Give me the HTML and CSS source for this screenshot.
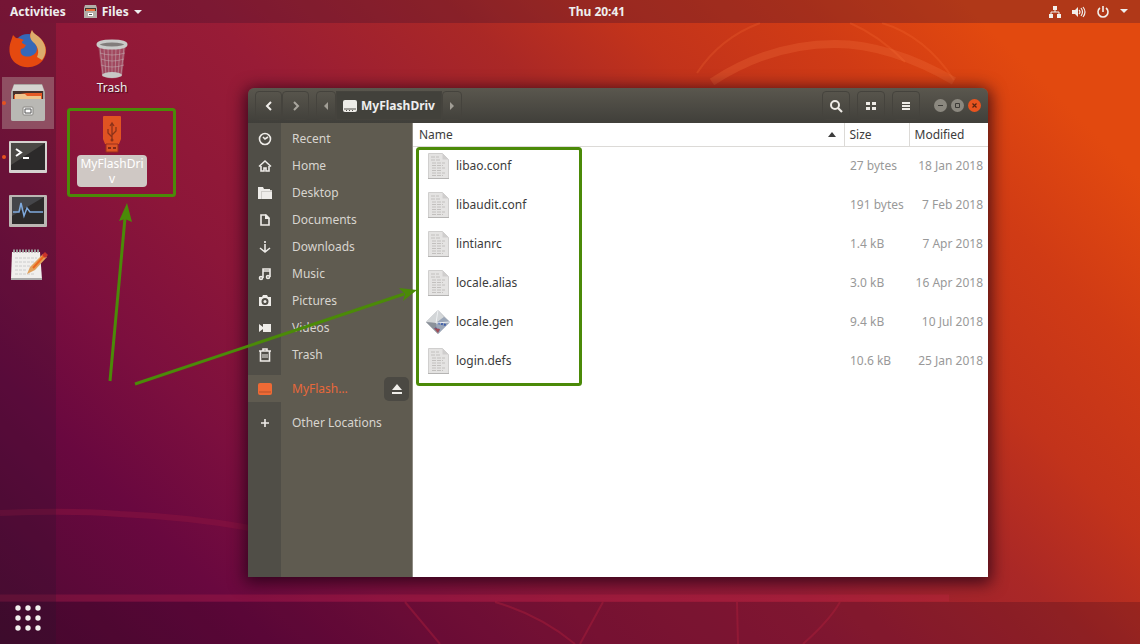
FILE: index.html
```
<!DOCTYPE html>
<html lang="en">

<head>
    <title>MyFlashDriv</title>
    <meta charset="UTF-8">
    <meta name="viewport" content="width=device-width, initial-scale=1">
    <link rel="stylesheet" href="styles.css">
</head>

<body>
    <svg class="wallpaper" viewBox="0 0 1140 644" preserveAspectRatio="none" aria-hidden="true">
        <g fill="none" stroke="#ff7a3c">
            <path d="M712 82Q770 44 835 44Q890 44 954 81" stroke="#ef6c3c" stroke-width="8" opacity=".3"/>
            <path d="M697 73Q720 38 760 23M850 23Q880 36 905 62M882 23Q925 36 954 80" stroke-width="2" opacity=".2"/>
        </g>
        <path d="M0 513Q70 510 120 514Q190 517 250 528" fill="none" stroke="#8c1440" stroke-width="6" opacity=".5"/>
        <path d="M0 598H949" fill="none" stroke="#d0284a" stroke-width="7" opacity=".25"/>
        <path d="M0 602H1140V644H0Z" fill="#200018" opacity=".2"/>
        <path d="M405 602L440 644M495 602Q540 615 575 644M603 602L580 644M737 602L738 644M840 602Q830 620 803 644" fill="none" stroke="#b3203c" stroke-width="2" opacity=".4"/>
    </svg>

    <header class="topbar">
        <div class="topbar-left">
            <button>Activities</button>
            <button>
                <svg width="13" height="13" viewBox="0 0 13 13"><path d="M1 0H12L13 3V13H0V3Z" fill="#b3afa8"/><path d="M1 3H12V6H1Z" fill="#413b35"/><path d="M2 4H11V6H2Z" fill="#ec713b"/><path d="M4 8H9V11H4Z" fill="#fff"/><path d="M5 9H8V10H5Z" fill="#555"/></svg>
                Files
                <svg width="8" height="4" viewBox="0 0 8 4"><path d="M0 0H8L4 4Z" fill="#eee"/></svg>
            </button>
        </div>
        <time class="clock">Thu 20:41</time>
        <button class="tray" aria-label="System menu">
            <svg width="14" height="14" viewBox="0 0 14 14"><path d="M5 1H9V5H5ZM1 9H5V13H1ZM9 9H13V13H9Z" fill="#f2efeb"/><path d="M7 4V7M3 9V7H11V9" fill="none" stroke="#f2efeb"/></svg>
            <svg width="14" height="14" viewBox="0 0 14 14"><path d="M0 5H3L6 2V12L3 9H0Z" fill="#f2efeb"/><path d="M7 5Q9 7 7 9M9 3Q12 7 9 11M11 2Q15 7 11 12" fill="none" stroke="#f2efeb" stroke-width="1.2"/></svg>
            <svg width="14" height="14" viewBox="0 0 14 14"><path d="M4 3A5 5 0 1 0 10 3M7 1V7" fill="none" stroke="#f2efeb" stroke-width="1.6"/></svg>
            <svg width="8" height="5" viewBox="0 0 8 5"><path d="M0 0H8L4 4Z" fill="#eee"/></svg>
        </button>
    </header>

    <div class="screen">
        <aside class="dock">
            <button aria-label="Firefox">
                <svg width="40" height="40" viewBox="0 0 40 40"><circle cx="20" cy="20" r="15" fill="#3568b8"/><path d="M24 1C25 5 29 6 32 9C39 15 40 24 35 31C30 38 18 41 9 35C1 30 0 20 3 12L5 6L8 9Q12 9 16 11C13 13 13 14 18 16L16 19L13 20C11 26 17 29 23 27C29 25 30 20 28 16C26 12 22 10 22 6Z" fill="#e5490f"/><path d="M24 1C25 5 30 6 33 10C39 17 39 25 34 31L29 28C32 22 29 16 25 13C21 9 22 5 24 1Z" fill="#dcac6c"/></svg>
            </button>
            <button class="active running" aria-label="Files">
                <svg width="38" height="40" viewBox="0 0 38 40"><path d="M5 1H33L36 9V36Q36 38 34 38H4Q2 38 2 36V9Z" fill="#aaa6a2"/><path d="M5 2H33L35 8H3Z" fill="#d5d3d0"/><path d="M4 8H34V17H4Z" fill="#48312c"/><path d="M5 12L17 10H33V17H5Z" fill="#e65a25"/><path d="M6 11H16L18 13H32V17H6Z" fill="#f0c48d"/><path d="M2 16H36V36Q36 38 34 38H4Q2 38 2 36Z" fill="#b9b8b4"/><rect x="14" y="24" width="10" height="8" rx="1" fill="#eee" stroke="#8a8884"/><path d="M16 26H22V30H16Z" fill="#fff" stroke="#555"/></svg>
            </button>
            <button class="running" aria-label="Terminal">
                <svg width="40" height="34" viewBox="0 0 40 34"><rect x="1" y="1" width="38" height="32" rx="1" fill="#d6d3d0"/><path d="M3 3H37V30H3Z" fill="#2c2a2a"/><path d="M3 3H37L3 25Z" fill="#4a4845"/><path d="M8 9L13 12.500L8 16M15 18H21" fill="none" stroke="#fff" stroke-width="2"/></svg>
            </button>
            <button aria-label="System Monitor">
                <svg width="40" height="34" viewBox="0 0 40 34"><rect x="1" y="1" width="38" height="32" rx="1" fill="#bbb7b3"/><path d="M4 3H36V30H4Z" fill="#2c2a2a"/><path d="M4 3H36L4 22Z" fill="#45464a"/><path d="M5 18H11L13 9L16 22L19 14L22 18H35" fill="none" stroke="#7faadd" stroke-width="1.5"/></svg>
            </button>
            <button aria-label="Text Editor">
                <svg width="40" height="34" viewBox="0 0 40 34"><path d="M4 4H32L34 31H3Z" fill="#f0efed"/><path d="M3 31H34" stroke="#aaa" stroke-width="2"/><path d="M5 3H32" stroke="#999" stroke-width="3" stroke-dasharray="2 1"/><path d="M7 10H29M7 14H26M7 18H22M7 22H19M7 26H26" stroke="#ccc" stroke-dasharray="3 1"/><path d="M19 26L22 19L35 6L39 9L27 22Z" fill="#e1a15c"/><path d="M25 20L36 8" stroke="#ec671e" stroke-width="2"/><path d="M34 7L37 4L40 7L37 10Z" fill="#c9332a"/></svg>
            </button>
            <button class="show-apps" aria-label="Show Applications">
                <svg width="28" height="28" viewBox="0 0 28 28" fill="#f2f0ee"><circle cx="4" cy="4" r="2.700"/><circle cx="14" cy="4" r="2.700"/><circle cx="24" cy="4" r="2.700"/><circle cx="4" cy="14" r="2.700"/><circle cx="14" cy="14" r="2.700"/><circle cx="24" cy="14" r="2.700"/><circle cx="4" cy="24" r="2.700"/><circle cx="14" cy="24" r="2.700"/><circle cx="24" cy="24" r="2.700"/></svg>
            </button>
        </aside>

        <main class="desktop">
            <div class="desktop-icon">
                <svg width="34" height="40" viewBox="0 0 34 40"><path d="M3 5L7 37Q17 42 27 37L31 5Z" fill="#c8b8b8" opacity=".3"/><path d="M5 8L8 36M9 9L11 37M13 9L14 38M17 9V38M21 9L20 38M25 9L23 37M29 8L26 36M5 14Q17 18 30 14M6 20Q17 24 29 20M6 26Q17 30 29 26" fill="none" stroke="#c9b8bb" stroke-width=".8" opacity=".6"/><ellipse cx="17" cy="36" rx="10" ry="3" fill="#c8c8c6"/><ellipse cx="17" cy="5.500" rx="14" ry="3.500" fill="#817d7b" stroke="#c9cac8" stroke-width="3"/></svg>
                <span>Trash</span>
            </div>
            <div class="desktop-icon selected">
                <svg width="20" height="38" viewBox="0 0 20 38"><path d="M1 2Q1 1 2 1H18Q19 1 19 2V24L17 29H3L1 24Z" fill="#e05322"/><path d="M4 29H16V37H4Z" fill="#de5526" stroke="#99301c"/><path d="M6 32H9V34H6ZM11 32H14V34H11Z" fill="#7e2918"/><path d="M10 26V9M8 11L10 8L12 11M10 22L6 18V14M10 20L14 16V12" fill="none" stroke="#8b3219" stroke-width="1.300"/><circle cx="10" cy="25" r="1.500" fill="#8b3219"/></svg>
                <span>MyFlashDriv</span>
            </div>
        </main>
    </div>

    <section class="window">
        <header class="titlebar">
            <div class="nav-buttons">
                <button aria-label="Back"><svg width="8" height="12" viewBox="0 0 8 12"><path d="M6 2L2 6L6 10" fill="none" stroke="#f0eeea" stroke-width="2"/></svg></button>
                <button aria-label="Forward"><svg width="8" height="12" viewBox="0 0 8 12"><path d="M2 2L6 6L2 10" fill="none" stroke="#a9a69e" stroke-width="2"/></svg></button>
            </div>
            <div class="pathbar">
                <button aria-label="Scroll path left"><svg width="5" height="8" viewBox="0 0 5 8"><path d="M4 0V8L0 4Z" fill="#a19e96"/></svg></button>
                <button class="current">
                    <svg width="14" height="12" viewBox="0 0 14 12"><rect width="14" height="12" rx="2" fill="#eeece8"/><path d="M1 9H13M3 10.500H4M6 10.500H7M9 10.500H10" stroke="#55534c"/></svg>
                    MyFlashDriv
                </button>
                <button aria-label="Scroll path right"><svg width="5" height="8" viewBox="0 0 5 8"><path d="M0 0V8L4 4Z" fill="#a19e96"/></svg></button>
            </div>
            <div class="tools">
                <button aria-label="Search"><svg width="14" height="14" viewBox="0 0 14 14"><circle cx="6" cy="6" r="4" fill="none" stroke="#eeebe6" stroke-width="2"/><path d="M9 9L13 13" stroke="#eeebe6" stroke-width="2.200"/></svg></button>
                <button aria-label="View as grid"><svg width="10" height="10" viewBox="0 0 10 10"><path d="M0 1H4V4H0ZM6 1H10V4H6ZM0 6H4V9H0ZM6 6H10V9H6Z" fill="#eeebe6"/></svg></button>
                <button aria-label="Menu"><svg width="10" height="10" viewBox="0 0 10 10"><path d="M1 2H9M1 5H9M1 8H9" stroke="#eeebe6" stroke-width="2"/></svg></button>
            </div>
            <div class="controls">
                <button aria-label="Minimize"><svg width="13" height="13" viewBox="0 0 13 13"><path d="M4 6.500H9" stroke="#3c3b37"/></svg></button>
                <button aria-label="Maximize"><svg width="13" height="13" viewBox="0 0 13 13"><path d="M4.500 4.500H8.500V8.500H4.500Z" fill="none" stroke="#3c3b37"/></svg></button>
                <button class="close" aria-label="Close"><svg width="13" height="13" viewBox="0 0 13 13"><path d="M4.500 4.500L8.500 8.500M8.500 4.500L4.500 8.500" stroke="#5a2510" stroke-width="1.200"/></svg></button>
            </div>
        </header>

        <div class="content">
            <nav class="places">
                <a href="#"><svg viewBox="0 0 14 14"><circle cx="7" cy="7" r="5.500"/><path d="M5 5L7 7L10 5"/></svg>Recent</a>
                <a href="#"><svg viewBox="0 0 14 14"><path d="M1 7.500L7 2L13 7.500M3 7V12H6V9H8V12H11V7"/></svg>Home</a>
                <a href="#"><svg viewBox="0 0 14 14"><path class="solid" d="M0 1H5L6 3H12V5H3V13H0ZM4 6H14V13H4Z"/><path class="solid" d="M2 4H14V13H1Z" opacity=".8"/></svg>Desktop</a>
                <a href="#"><svg viewBox="0 0 14 14"><path d="M3 2H8L11 5V12H3Z"/><path class="solid" d="M7 1L12 6H7Z"/></svg>Documents</a>
                <a href="#"><svg viewBox="0 0 14 14"><path d="M7 1V3M7 4V12M2 8L7 12L12 8"/></svg>Downloads</a>
                <a href="#"><svg viewBox="0 0 14 14"><path d="M5 11V2H12V10M5 4H12"/><circle cx="3" cy="11" r="1.500"/><circle cx="10" cy="10" r="1.500"/></svg>Music</a>
                <a href="#"><svg viewBox="0 0 14 14"><path class="solid" fill-rule="evenodd" d="M1 3H4L5 1H9L10 3H13V12H1ZM7 4A3.500 3.500 0 1 0 7 11A3.500 3.500 0 1 0 7 4Z"/><circle class="solid" cx="7" cy="7.500" r="1.500"/></svg>Pictures</a>
                <a href="#"><svg viewBox="0 0 14 14"><path class="solid" d="M5 3H13V11H5ZM1 3L5 6V8L1 11Z"/></svg>Videos</a>
                <a href="#"><svg viewBox="0 0 14 14"><path d="M1 3H13M5 3V1H9V3M2.500 3V13H11.500V3"/><path d="M5 6V10M7 6V10M9 6V10" stroke-width="1"/></svg>Trash</a>
                <div class="drive">
                    <a href="#"><svg viewBox="0 0 14 14"><rect class="solid" x="0" y="1" width="14" height="12" rx="2"/><path d="M1 10H13" stroke="#b5502a" stroke-width="1"/></svg>MyFlash…</a>
                    <button aria-label="Eject"><svg width="12" height="12" viewBox="0 0 12 12"><path d="M6 1L11 7H1ZM1 9H11V11H1Z" fill="#f0eeea"/></svg></button>
                </div>
                <a href="#"><svg viewBox="0 0 14 14"><path d="M7 3V11M3 7H11"/></svg>Other Locations</a>
            </nav>

            <div class="files">
                <table>
                    <thead>
                        <tr>
                            <th class="name">Name <svg width="8" height="5" viewBox="0 0 8 5"><path d="M0 5L4 0L8 5Z" fill="#3c3c3c"/></svg></th>
                            <th class="size">Size</th>
                            <th class="modified">Modified</th>
                        </tr>
                    </thead>
                    <tbody>
                        <tr><td><svg class="file-icon"><use href="#doc"/></svg>libao.conf</td><td>27 bytes</td><td>18 Jan 2018</td></tr>
                        <tr><td><svg class="file-icon"><use href="#doc"/></svg>libaudit.conf</td><td>191 bytes</td><td>7 Feb 2018</td></tr>
                        <tr><td><svg class="file-icon"><use href="#doc"/></svg>lintianrc</td><td>1.4 kB</td><td>7 Apr 2018</td></tr>
                        <tr><td><svg class="file-icon"><use href="#doc"/></svg>locale.alias</td><td>3.0 kB</td><td>16 Apr 2018</td></tr>
                        <tr><td><svg class="file-icon"><use href="#gen"/></svg>locale.gen</td><td>9.4 kB</td><td>10 Jul 2018</td></tr>
                        <tr><td><svg class="file-icon"><use href="#doc"/></svg>login.defs</td><td>10.6 kB</td><td>25 Jan 2018</td></tr>
                    </tbody>
                </table>
            </div>
        </div>
    </section>

    <!-- highlight boxes and arrows -->
    <svg class="marks" width="600" height="400" viewBox="0 0 600 400" aria-hidden="true">
        <g fill="none" stroke="#4b8a08" stroke-width="3">
            <rect x="68.500" y="109.500" width="106" height="86" rx="2"/>
            <rect x="417.500" y="148.500" width="163" height="236" rx="2"/>
            <path d="M110 381L125 218M135 384L404 294"/>
        </g>
        <path d="M127 203L132 222L125 219L119 221ZM417 290L403 301L405 294L399 288Z" fill="#4b8a08"/>
    </svg>

    <svg class="symbols" aria-hidden="true">
        <symbol id="doc" viewBox="0 0 24 28">
            <path d="M2.500 1.500H16.500L22.500 7.500V26.500H2.500Z" fill="#e4e3e2" stroke="#d0cfce"/>
            <path d="M16.500 1.500V7.500H22.500Z" fill="#cfcecd"/>
            <path d="M5 5H13M5 8H14M6 11H19M6 13.500H17M6 16H19M6 18.500H15M6 21H19M6 23.500H17" stroke="#c2c0be" stroke-dasharray="4 1"/>
            <path d="M2 26.500H23" stroke="#b5b4b3"/>
        </symbol>
        <symbol id="gen" viewBox="0 0 24 28">
            <path d="M12 2L24 14L12 26L0 14Z" fill="#b4b8bd"/>
            <path d="M12 2L18 9L10 15L0 14Z" fill="#d3d6d8"/>
            <path d="M0 14L10 15L12 26Z" fill="#8b919a"/>
            <path d="M10 15L18 9L24 14L12 26Z" fill="#9aa6b8"/>
            <path d="M12 15L20 17M9 20L14 23" stroke="#3d5ca8" stroke-width="2" stroke-dasharray="2 1"/>
            <path d="M8 20L12 25L14 21Z" fill="#a04c55"/>
            <path d="M12 2L10 15L24 14" fill="none" stroke="#eef0f2"/>
        </symbol>
    </svg>
</body>

</html>
```
FILE: styles.css
```
* { box-sizing: border-box; }

body {
    position: relative;
    display: flex;
    flex-direction: column;
    min-height: 100vh;
    margin: 0;
    overflow: hidden;
    color: #eee;
    font: 12px/18px "Noto Sans", "Open Sans", sans-serif;
    background: linear-gradient(45deg, #4e0a32 0%, #69083f 15%, #7c0f3e 24%, #8c1639 34%, #981c36 47%, #aa2826 61%, #c2331b 70%, #d03b15 80%, #e2490f 90%, #e2490f 100%);
}

button {
    display: flex;
    align-items: center;
    justify-content: center;
    margin: 0;
    padding: 0;
    border: 0;
    background: none;
    color: inherit;
    font: inherit;
}

a { color: inherit; text-decoration: none; }
svg { display: block; flex: none; }

.wallpaper {
    position: absolute;
    inset: 0;
    width: 100%;
    height: 100%;
}

.symbols { position: absolute; width: 0; height: 0; }

/* top bar */
.topbar {
    position: relative;
    display: grid;
    grid-template-columns: 1fr auto 1fr;
    align-items: center;
    height: 23px;
    padding: 0 12px 0 10px;
    background: rgba(60, 15, 45, .3);
    font-weight: bold;
}

.topbar-left { display: flex; gap: 18px; }
.topbar-left button { gap: 5px; }
.clock { margin-left: 56px; }
.tray { justify-self: end; gap: 10px; }

/* dock and desktop */
.screen {
    position: relative;
    display: flex;
    flex: 1;
}

.dock {
    display: flex;
    flex-direction: column;
    align-items: center;
    gap: 2px;
    width: 56px;
    background: rgba(40, 20, 45, .25);
}

.dock button {
    position: relative;
    width: 52px;
    height: 52px;
}

.dock .active { background: rgba(200, 190, 180, .35); }

.running::before {
    content: "";
    position: absolute;
    left: 0;
    top: 24px;
    width: 4px;
    height: 4px;
    border-radius: 50%;
    background: #e5521f;
}

.dock .show-apps { margin-top: auto; }

.desktop { padding-top: 16px; }

.desktop-icon {
    display: flex;
    flex-direction: column;
    align-items: center;
    width: 112px;
    margin-bottom: 18px;
    text-align: center;
    text-shadow: 1px 1px 1px rgba(0, 0, 0, .6);
}

.selected span {
    width: 70px;
    margin-top: 2px;
    padding: 1px 3px;
    border-radius: 4px;
    background: #cfc8c4;
    color: #fff;
    line-height: 15px;
    word-break: break-all;
    text-shadow: none;
}

/* file manager window */
.window {
    position: absolute;
    top: 88px;
    right: 152px;
    bottom: 67px;
    left: 248px;
    display: flex;
    flex-direction: column;
    border-radius: 6px 6px 0 0;
    box-shadow: 0 3px 16px 3px rgba(30, 0, 20, .75);
}

.titlebar {
    display: flex;
    align-items: center;
    height: 35px;
    padding: 0 7px;
    border-radius: 6px 6px 0 0;
    background: linear-gradient(#5a574e, #403f3a);
}

.titlebar button { height: 29px; }

.nav-buttons,
.pathbar,
.tools,
.controls { display: flex; }

.nav-buttons button,
.pathbar button,
.tools button {
    border: 1px solid #45433d;
    border-radius: 4px;
}

.nav-buttons button { width: 27px; }
.pathbar { margin-left: 7px; }
.pathbar button { width: 20px; }

.pathbar .current {
    gap: 4px;
    width: 106px;
    border-radius: 0;
    background: #42413b;
    font-weight: bold;
}

.tools { gap: 7px; margin-left: auto; }
.tools button { width: 28px; }

.controls { gap: 4px; margin-left: 14px; }

.titlebar .controls button {
    width: 13px;
    height: 13px;
    border-radius: 50%;
    background: #8b887f;
}

.titlebar .controls .close { background: #e9541f; }

.content {
    display: flex;
    flex: 1;
}

.places {
    width: 165px;
    padding-top: 2px;
    border-right: 1px solid #8f8c84;
    background: linear-gradient(90deg, #504e47 33px, #5f5b50 33px);
    color: #d8d5cf;
}

.places a {
    display: flex;
    align-items: center;
    gap: 20px;
    height: 27px;
    padding-left: 10px;
}

.places a svg {
    width: 14px;
    height: 14px;
    fill: none;
    stroke: #eeece8;
    stroke-width: 1.6;
}

.places .solid { fill: #eeece8; stroke: none; }

.places .drive {
    display: flex;
    align-items: center;
    justify-content: space-between;
    margin: 7px 0;
    padding-right: 3px;
    background: #5f5b50;
    color: #e8683a;
}

.places .drive .solid { fill: #ee6a35; }

.drive button {
    width: 25px;
    height: 24px;
    border-radius: 5px;
    background: #4b4943;
}

.files {
    flex: 1;
    background: #fff;
    color: #3c3c3c;
}

table {
    width: 100%;
    border-collapse: collapse;
    table-layout: fixed;
}

th {
    height: 23px;
    padding: 2px 5px 0 6px;
    border-bottom: 1px solid #dcdad7;
    font-weight: normal;
    text-align: left;
}

th + th { padding-left: 5px; border-left: 1px solid #dcdad7; }
th svg { float: right; margin: 6px 3px 0 0; }
.size { width: 65px; }
.modified { width: 79px; }

td {
    height: 39px;
    padding: 0 5px 0 6px;
    color: #999;
    white-space: nowrap;
}

td:first-child {
    padding-left: 43px;
    color: #3c3c3c;
}

td:last-child { text-align: right; }

.file-icon {
    float: left;
    width: 24px;
    height: 28px;
    margin: -5px 0 -5px -30px;
}

.marks {
    position: absolute;
    top: 0;
    left: 0;
    pointer-events: none;
}
```
